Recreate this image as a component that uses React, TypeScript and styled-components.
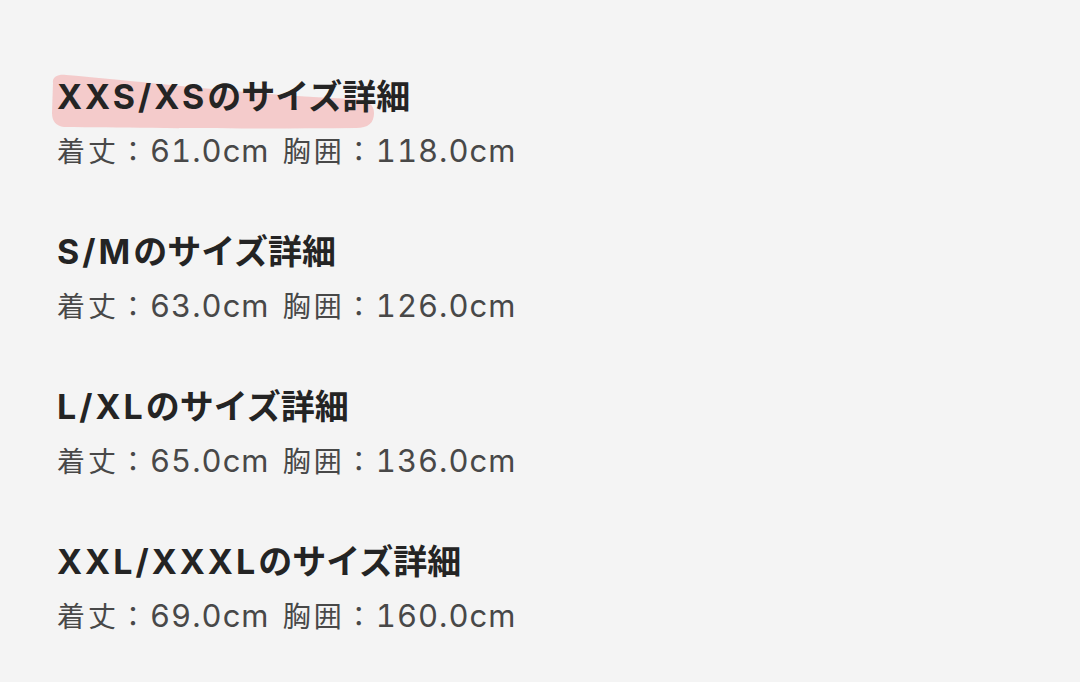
import React from "react";
import styled, { createGlobalStyle } from "styled-components";

const sizes = [
  { name: "XXS/XS", length: "61.0", chest: "118.0", marked: true },
  { name: "S/M", length: "63.0", chest: "126.0" },
  { name: "L/XL", length: "65.0", chest: "136.0" },
  { name: "XXL/XXXL", length: "69.0", chest: "160.0" },
];

const Global = createGlobalStyle`
  html, body {
    margin: 0;
    padding: 0;
    background: #f4f4f4;
  }
  body {
    font-family: "Noto Sans CJK JP", sans-serif;
  }
`;

const Page = styled.div`
  width: 1080px;
  height: 682px;
  box-sizing: border-box;
  padding: 71px 0 0 57px;
  display: flex;
  flex-direction: column;
  gap: 54px;
  background: #f4f4f4;
  overflow: hidden;
`;

const Block = styled.section`
  display: flex;
  flex-direction: column;
  gap: 9px;
`;

const Title = styled.h2`
  position: relative;
  align-self: flex-start;
  margin: 0;
  height: 48px;
  font-size: 34px;
  line-height: 48px;
  font-weight: 700;
  color: #242424;
  white-space: nowrap;
`;

const TitleText = styled.span`
  position: relative;
  z-index: 1;
`;

const SizeName = styled.span`
  font-family: Inter, "Noto Sans CJK JP", sans-serif;
  line-height: 1;
  letter-spacing: 3px;
`;

const Marker = styled.svg`
  position: absolute;
  left: -7px;
  top: 2px;
  width: 326px;
  height: 58px;
  z-index: 0;
`;

const Detail = styled.p`
  margin: 0;
  height: 44px;
  font-size: 28px;
  line-height: 44px;
  font-weight: 400;
  letter-spacing: 3px;
  color: #484848;
  white-space: nowrap;
`;

const Num = styled.span`
  font-family: Inter, sans-serif;
  font-size: 31px;
  line-height: 1;
  font-variant-numeric: tabular-nums;
  letter-spacing: 1px;
  margin-right: 4px;
`;

function Highlight() {
  return (
    <Marker viewBox="0 0 326 58" aria-hidden>
      <path
        d="M3 10 C 2 4, 8 1, 16 2 C 90 8, 200 22, 306 26 C 318 27, 324 32, 324 40 C 324 50, 318 55, 306 55 C 200 56, 90 55, 14 54 C 6 53, 2 48, 2 40 Z"
        fill="#f3c3c3"
        opacity="0.85"
      />
    </Marker>
  );
}

export default function App() {
  return (
    <>
      <Global />
      <Page>
        {sizes.map((s) => (
          <Block key={s.name}>
            <Title>
              {s.marked && <Highlight />}
              <TitleText>
                <SizeName>{s.name}</SizeName>のサイズ詳細
              </TitleText>
            </Title>
            <Detail>
              着丈：<Num>{s.length}cm</Num> 胸囲：<Num>{s.chest}cm</Num>
            </Detail>
          </Block>
        ))}
      </Page>
    </>
  );
}
